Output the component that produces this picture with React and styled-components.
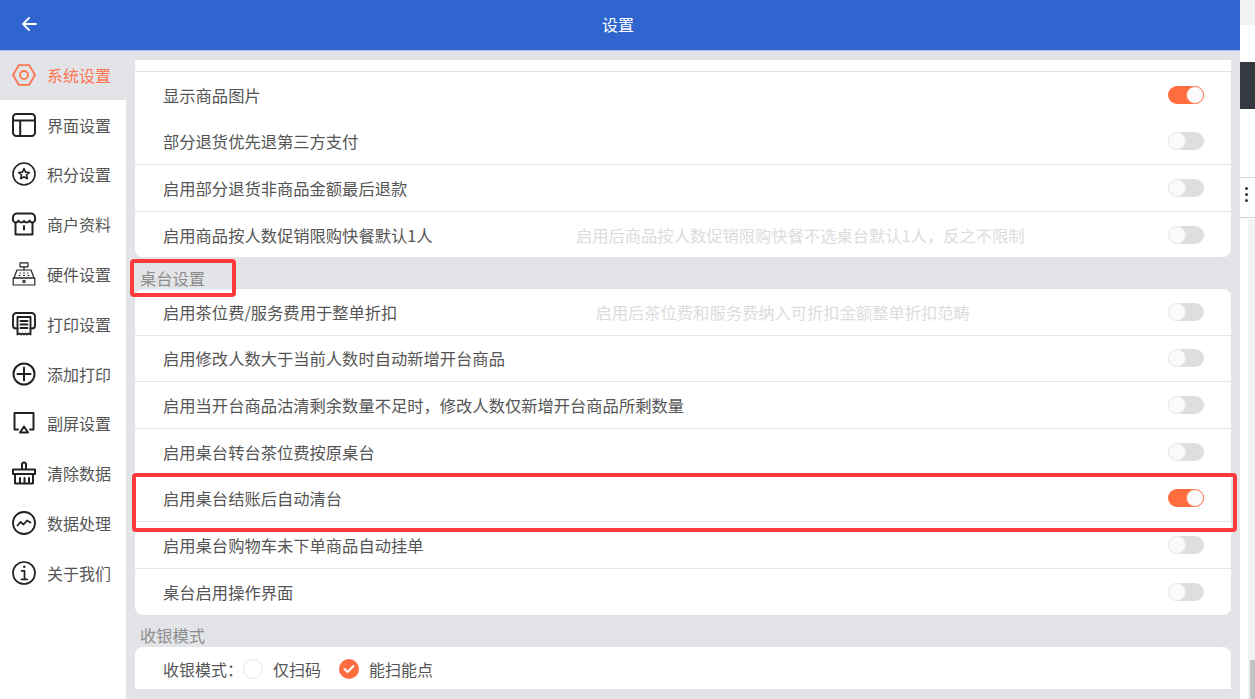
import React from 'react'
import styled, { createGlobalStyle } from 'styled-components'

const GlobalStyle = createGlobalStyle`
    html, body {
        margin: 0;
        padding: 0;
        height: 100%;
        overflow: hidden;
        background: #fff;
        font-family: "Noto Sans CJK SC", "Noto Sans", sans-serif;
    }
`

const Page = styled.div`
    position: relative;
    display: flex;
    width: 1255px;
    height: 699px;
    overflow: hidden;
`

const Screen = styled.div`
    display: flex;
    flex-direction: column;
    width: 1240px;
    height: 699px;
    background: #e3e4e8;
`

const Header = styled.header`
    flex: none;
    position: relative;
    z-index: 1;
    display: flex;
    align-items: center;
    justify-content: center;
    height: 50px;
    box-sizing: border-box;
    padding: 0 4px 2px 0;
    background: #3065cf;
    box-shadow: 0 1px 0 #a9c0e8;
    color: #fff;
    font-size: 16px;
`

const BackButton = styled.button`
    position: absolute;
    left: 20px;
    top: 14px;
    display: flex;
    width: 18px;
    height: 20px;
    padding: 0;
    align-items: center;
    background: none;
    border: 0;
`

const Body = styled.div`
    flex: 1;
    display: flex;
    min-height: 0;
`

const Sidebar = styled.nav`
    flex: none;
    width: 126px;
    background: #fff;
`

const NavItem = styled.div`
    display: flex;
    align-items: center;
    gap: 11px;
    height: 49.8px;
    padding-left: 12px;
    background: ${(p) => (p.$active ? '#e3e4e8' : '#fff')};
    color: ${(p) => (p.$active ? '#fd7550' : '#555')};
    font-size: 16px;
    line-height: 48px;

    svg {
        flex: none;
    }
`

const Content = styled.main`
    flex: 1;
    padding: 10px 9px 0;
    min-width: 0;
`

const Card = styled.section`
    height: ${(p) => p.$height || 'auto'};
    background: #fff;
    border-radius: ${(p) => p.$radius || '8px'};
    overflow: hidden;
`

const TopSliver = styled.div`
    height: 11px;
    border-bottom: 1px solid #e4e4e4;
`

const Row = styled.div`
    display: flex;
    align-items: center;
    height: ${(p) => p.$height || '46.6px'};
    box-sizing: border-box;
    padding: 0 27px 0 28px;
    border-bottom: ${(p) => (p.$line ? '1px solid #e6e6e6' : '0')};
    color: #555;
    font-size: 16.3px;
`

const Label = styled.span`
    flex: none;
`

const Hint = styled.span`
    flex: 1;
    text-align: center;
    color: #dcdcdc;
`

const Track = styled.span`
    flex: none;
    position: relative;
    width: 36px;
    height: 18px;
    margin-left: auto;
    border-radius: 9px;
    background: ${(p) => (p.$on ? '#ff6d3f' : '#dedede')};
`

const Knob = styled.span`
    position: absolute;
    top: 0;
    left: ${(p) => (p.$on ? '18px' : '0')};
    width: 18px;
    height: 18px;
    box-sizing: border-box;
    border-radius: 50%;
    background: #fafafa;
    border: 1px solid ${(p) => (p.$on ? '#ff8a64' : '#ececec')};
`

const SectionTitle = styled.h3`
    margin: 0;
    height: 32px;
    padding: ${(p) => p.$top}px 0 0 5px;
    box-sizing: border-box;
    color: #8c8c8c;
    font-size: 16.3px;
    font-weight: 400;
    line-height: 24px;
`

const ModeRow = styled.div`
    display: flex;
    align-items: center;
    height: 42px;
    box-sizing: border-box;
    padding: 2px 0 0 28px;
    color: #555;
    font-size: 16px;
`

const Radio = styled.span`
    flex: none;
    display: flex;
    align-items: center;
    justify-content: center;
    width: 20px;
    height: 20px;
    box-sizing: border-box;
    margin: 0 10px 0 0;
    border-radius: 50%;
    border: ${(p) => (p.$checked ? '0' : '1px solid #e4e4ea')};
    background: ${(p) => (p.$checked ? '#ff6d3f' : '#fff')};
`

const ModeOption = styled.span`
    margin-right: 18px;
`

const Highlight = styled.div`
    position: absolute;
    left: ${(p) => p.$x}px;
    top: ${(p) => p.$y}px;
    width: ${(p) => p.$w}px;
    height: ${(p) => p.$h}px;
    box-sizing: border-box;
    border: 4px solid #ff3a3f;
    border-radius: 4px;
`

/* what is left of the window behind the app */
const BackStrip = styled.aside`
    flex: none;
    position: relative;
    width: 15px;
    height: 699px;
    background: #fff;
`

const StripTop = styled.div`
    height: 25px;
    background: #f2f3f4;
`

const StripDark = styled.div`
    height: 47px;
    margin-top: 37px;
    background: #353a42;
`

const StripMenu = styled.div`
    display: flex;
    flex-direction: column;
    align-items: center;
    gap: 3px;
    width: 15px;
    height: 41px;
    margin-top: 68px;
    padding: 9px 2px 0 0;
    box-sizing: border-box;
    border-top: 1px solid #d9d9d9;
    border-bottom: 1px solid #cfcfcf;

    i {
        width: 3px;
        height: 3px;
        border-radius: 50%;
        background: #333;
    }
`

const StripTrack = styled.div`
    position: absolute;
    left: 8px;
    top: 219px;
    right: 0;
    bottom: 0;
    background: #f1f1f1;
`

const StripThumb = styled.div`
    position: absolute;
    left: 2px;
    right: 0;
    bottom: 0;
    height: 39px;
    background: #c3c3c3;
`

const Ico = ({ children, color = '#222', width = 1.8 }) => (
    <svg width="24" height="24" viewBox="0 0 24 24" fill="none" stroke={color} strokeWidth={width} strokeLinecap="round" strokeLinejoin="round">
        {children}
    </svg>
)

const icons = {
    hex: (
        <Ico color="#fd7550" width={1.8}>
            <path d="M6.8 2.200h10.400L23 12l-5.800 9.800H6.800L1 12z" />
            <circle cx="12" cy="12" r="4" />
        </Ico>
    ),
    layout: (
        <Ico width={2}>
            <rect x="1" y="1" width="22" height="22" rx="3.500" />
            <path d="M1 7.500h22M8.200 7.500V23" />
        </Ico>
    ),
    star: (
        <Ico width={1.6}>
            <circle cx="12" cy="12" r="11" />
            <path d="M12 6.600l1.600 3.500 3.700.4-2.800 2.500.8 3.700-3.300-1.900-3.300 1.900.8-3.700-2.800-2.500 3.700-.4z" />
        </Ico>
    ),
    store: (
        <Ico width={2}>
            <path d="M5 1.500h14c2.300 0 4 1.700 4 4V8c0 1.800-2 2.800-3.600 2.200-.8-.3-1.400-.8-1.800-1.600-.9 2.200-4.300 2.400-5.600.4-1.300 2-4.700 1.800-5.600-.4-.4.8-1 1.300-1.800 1.600C3 10.800 1 9.800 1 8V5.500c0-2.300 1.700-4 4-4z" />
            <path d="M3.500 11v11.500h17V11" />
            <path d="M12 14v3.500" />
        </Ico>
    ),
    register: (
        <Ico width={1.2}>
            <path d="M8 .8h8v4H8zM12 4.800V8" />
            <path d="M5 8h14l3 8H2z" />
            <path d="M1.200 16h21.600v7H1.200z" />
            <path d="M8 11h.5M11.500 11h1M15.500 11h.5M7 13.500h1M11.500 13.500h1M16 13.500h1" />
            <circle cx="12" cy="19.500" r="1.200" />
        </Ico>
    ),
    printer: (
        <Ico width={1.9}>
            <path d="M5.500 16.500H4c-1.700 0-3-1.300-3-3V4.500c0-1.900 1.500-3.500 3.500-3.500h15c2 0 3.500 1.600 3.500 3.500v9c0 1.700-1.300 3-3 3h-1.500" />
            <path d="M5.500 5h13v17.500l-2-1-1.500 1-1.500-1-1.500 1-1.500-1-1.500 1-1.500-1-2 1z" />
            <path d="M8.500 9h7M8.500 12.500h7M8.500 16h7" />
        </Ico>
    ),
    plus: (
        <Ico width={2}>
            <circle cx="12" cy="12" r="10.500" />
            <path d="M12 5.500v13M5.500 12h13" />
        </Ico>
    ),
    airplay: (
        <Ico width={2}>
            <path d="M6 18.500H2.500V2h19v16.500H18" />
            <path d="M12 15.500l4 6H8z" />
        </Ico>
    ),
    broom: (
        <Ico width={2}>
            <path d="M10 8V3.500c0-1.200.9-2 2-2s2 .8 2 2V8" />
            <path d="M1 8.500h22v4.500H1z" />
            <path d="M3 13v9.500h18V13" />
            <path d="M8 22v-5M12.500 22v-5M17 22v-5" />
        </Ico>
    ),
    activity: (
        <Ico width={1.8}>
            <circle cx="12" cy="12" r="11" />
            <path d="M5.500 14.500l3-3.500 3 2.500 3.500-4 3.500 2" />
        </Ico>
    ),
    info: (
        <Ico width={1.7}>
            <circle cx="12" cy="12" r="11" />
            <circle cx="12.300" cy="5.800" r="1.200" fill="#222" stroke="none" />
            <path d="M9.600 9.800h2.900v8.200M9.400 18.300h5.800" />
        </Ico>
    )
}

const navItems = [
    ['hex', '系统设置'],
    ['layout', '界面设置'],
    ['star', '积分设置'],
    ['store', '商户资料'],
    ['register', '硬件设置'],
    ['printer', '打印设置'],
    ['plus', '添加打印'],
    ['airplay', '副屏设置'],
    ['broom', '清除数据'],
    ['activity', '数据处理'],
    ['info', '关于我们']
]

const displayRows = [
    { label: '显示商品图片', on: true },
    { label: '部分退货优先退第三方支付', line: true },
    { label: '启用部分退货非商品金额最后退款', line: true },
    { label: '启用商品按人数促销限购快餐默认1人', hint: '启用后商品按人数促销限购快餐不选桌台默认1人，反之不限制' }
]

const tableRows = [
    { label: '启用茶位费/服务费用于整单折扣', hint: '启用后茶位费和服务费纳入可折扣金额整单折扣范畴', line: true },
    { label: '启用修改人数大于当前人数时自动新增开台商品', line: true },
    { label: '启用当开台商品沽清剩余数量不足时，修改人数仅新增开台商品所剩数量', line: true },
    { label: '启用桌台转台茶位费按原桌台', line: true },
    { label: '启用桌台结账后自动清台', on: true, line: true },
    { label: '启用桌台购物车未下单商品自动挂单', line: true },
    { label: '桌台启用操作界面' }
]

const Toggle = ({ on }) => (
    <Track $on={on}>
        <Knob $on={on} />
    </Track>
)

const SettingRow = ({ label, hint, on, line, height }) => (
    <Row $line={line} $height={height}>
        <Label>{label}</Label>
        {hint && <Hint>{hint}</Hint>}
        <Toggle on={on} />
    </Row>
)

export default function App () {
    return (
        <Page>
            <GlobalStyle />
            <Screen>
                <Header>
                    <BackButton aria-label="返回">
                        <svg width="18" height="18" viewBox="0 0 18 18" fill="none" stroke="#fff" strokeWidth="1.800" strokeLinecap="round" strokeLinejoin="round">
                            <path d="M16 9H3M9 3L3 9l6 6" />
                        </svg>
                    </BackButton>
                    设置
                </Header>
                <Body>
                    <Sidebar>
                        {navItems.map(([icon, text], i) => (
                            <NavItem key={text} $active={i === 0}>
                                {icons[icon]}
                                {text}
                            </NavItem>
                        ))}
                    </Sidebar>
                    <Content>
                        <Card $radius="0 0 8px 8px" $height="197px">
                            <TopSliver />
                            {displayRows.map((row) => <SettingRow key={row.label} height="46.5px" {...row} />)}
                        </Card>
                        <SectionTitle $top={9}>桌台设置</SectionTitle>
                        <Card>
                            {tableRows.map((row) => <SettingRow key={row.label} {...row} />)}
                        </Card>
                        <SectionTitle $top={8}>收银模式</SectionTitle>
                        <Card $radius="8px 8px 0 0">
                            <ModeRow>
                                <Label>收银模式：</Label>
                                <Radio />
                                <ModeOption>仅扫码</ModeOption>
                                <Radio $checked>
                                    <svg width="14" height="14" viewBox="0 0 14 14" fill="none" stroke="#fff" strokeWidth="2" strokeLinecap="round" strokeLinejoin="round">
                                        <path d="M2.500 7l3 3 6-6" />
                                    </svg>
                                </Radio>
                                <ModeOption>能扫能点</ModeOption>
                            </ModeRow>
                        </Card>
                    </Content>
                </Body>
            </Screen>
            <BackStrip>
                <StripTop />
                <StripDark />
                <StripMenu>
                    <i />
                    <i />
                    <i />
                </StripMenu>
                <StripTrack>
                    <StripThumb />
                </StripTrack>
            </BackStrip>
            <Highlight $x={130} $y={259} $w={106} $h={38} />
            <Highlight $x={132} $y={473} $w={1105} $h={59} />
        </Page>
    )
}
